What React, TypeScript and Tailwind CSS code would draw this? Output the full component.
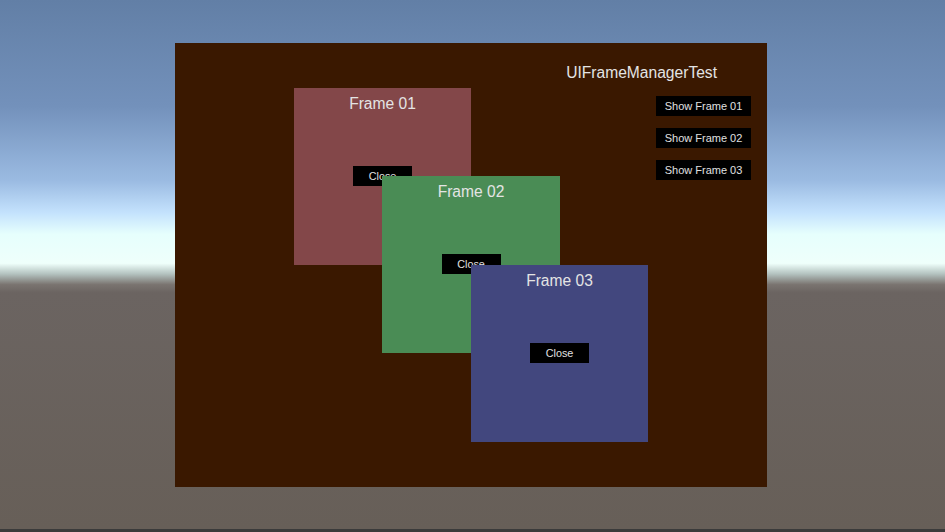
import React from 'react'

const frames = [
  { title: 'Frame 01', className: 'left-[119px] top-[45px] w-[177px] bg-[#834749]' },
  { title: 'Frame 02', className: 'left-[207px] top-[133px] w-[178px] bg-[#4a8c55]' },
  { title: 'Frame 03', className: 'left-[296px] top-[222px] w-[177px] bg-[#42477e]' },
]

function Frame({ title, className }: { title: string; className: string }) {
  return (
    <div className={`absolute h-[177px] flex flex-col items-center ${className}`}>
      <div className="mt-[6px] h-[20px] leading-[20px] text-[15.6px] text-[#e4e4e4]">{title}</div>
      <button className="mt-[52px] w-[59px] h-[20px] bg-black text-[10.8px] text-[#e0e0e0] leading-[20px]">Close</button>
    </div>
  )
}

export default function App() {
  return (
    <div
      className="relative w-[945px] h-[532px] overflow-hidden pt-[43px] pl-[175px] bg-[linear-gradient(to_bottom,#627fa6_0%,#7391bb_20%,#9bbbe2_34%,#c4e2fd_40%,#e6fffd_44%,#effffb_49.5%,#b3c2bf_51.5%,#7a7470_53.5%,#6b6461_55%,#675f58_99.4%,#3b3b3b_99.5%)]"
      style={{ fontFamily: '"Liberation Sans", Arial, sans-serif' }}
    >
      <div className="relative w-[592px] h-[444px] bg-[#3a1800] flex flex-col items-end pr-[16px]">
        <div className="mt-[21px] mr-[34px] h-[18px] leading-[18px] text-[15.6px] text-[#e4e4e4]">UIFrameManagerTest</div>
        <div className="mt-[14px] flex flex-col gap-[12px]">
          {['Show Frame 01', 'Show Frame 02', 'Show Frame 03'].map(label => (
            <button key={label} className="w-[95px] h-[20px] bg-black text-[11px] leading-[20px] text-[#e0e0e0]">
              {label}
            </button>
          ))}
        </div>
        {frames.map(f => (
          <Frame key={f.title} title={f.title} className={f.className} />
        ))}
      </div>
    </div>
  )
}
